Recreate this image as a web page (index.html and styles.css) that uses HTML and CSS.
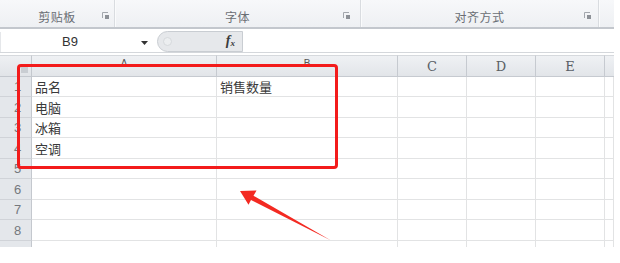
FILE: index.html
```html
<!DOCTYPE html>
<html lang="zh">
<head>
<meta charset="utf-8">
<link rel="stylesheet" href="styles.css">
</head>
<body>
<div class="app">
  <div class="ribbon">
    <div class="group g1"><span class="glabel">剪贴板</span><svg class="launch" width="7" height="7" viewBox="0 0 7 7"><path d="M0.5 6V0.5H6" fill="none" stroke="#a3a7ad"/><rect x="3" y="3" width="4" height="4" fill="#8d9197"/></svg></div>
    <div class="group g2"><span class="glabel">字体</span><svg class="launch" width="7" height="7" viewBox="0 0 7 7"><path d="M0.5 6V0.5H6" fill="none" stroke="#a3a7ad"/><rect x="3" y="3" width="4" height="4" fill="#8d9197"/></svg></div>
    <div class="group g3"><span class="glabel">对齐方式</span><svg class="launch" width="7" height="7" viewBox="0 0 7 7"><path d="M0.5 6V0.5H6" fill="none" stroke="#a3a7ad"/><rect x="3" y="3" width="4" height="4" fill="#8d9197"/></svg></div>
    <div class="group g4"></div>
  </div>
  <div class="fbar">
    <div class="namebox"><span class="nameval">B9</span><svg class="dd" width="7" height="4" viewBox="0 0 7 4"><path d="M0 0H7L3.5 4Z" fill="#333"/></svg></div>
    <div class="pill"><span class="dot"></span><span class="fx">f<sub>x</sub></span></div>
    <div class="finput"></div>
  </div>
  <div class="sheet">
    <div class="corner"><span class="tri"></span></div>
    <div class="ch ch-small">A</div>
    <div class="ch ch-small">B</div>
    <div class="ch">C</div>
    <div class="ch">D</div>
    <div class="ch">E</div>
    <div class="ch ch-last"></div>

    <div class="rh">1</div><div class="c">品名</div><div class="c">销售数量</div><div class="c"></div><div class="c"></div><div class="c"></div><div class="c"></div>
    <div class="rh">2</div><div class="c">电脑</div><div class="c"></div><div class="c"></div><div class="c"></div><div class="c"></div><div class="c"></div>
    <div class="rh">3</div><div class="c">冰箱</div><div class="c"></div><div class="c"></div><div class="c"></div><div class="c"></div><div class="c"></div>
    <div class="rh">4</div><div class="c">空调</div><div class="c"></div><div class="c"></div><div class="c"></div><div class="c"></div><div class="c"></div>
    <div class="rh">5</div><div class="c"></div><div class="c"></div><div class="c"></div><div class="c"></div><div class="c"></div><div class="c"></div>
    <div class="rh">6</div><div class="c"></div><div class="c"></div><div class="c"></div><div class="c"></div><div class="c"></div><div class="c"></div>
    <div class="rh">7</div><div class="c"></div><div class="c"></div><div class="c"></div><div class="c"></div><div class="c"></div><div class="c"></div>
    <div class="rh">8</div><div class="c"></div><div class="c"></div><div class="c"></div><div class="c"></div><div class="c"></div><div class="c"></div>
    <div class="rh rh-cut"></div><div class="c c-cut"></div><div class="c c-cut"></div><div class="c c-cut"></div><div class="c c-cut"></div><div class="c c-cut"></div><div class="c c-cut"></div>
  </div>
  <div class="highlight"></div>
  <svg class="arrow" width="620" height="263" viewBox="0 0 620 263"><polygon points="240,191 256.5,190.5 253.5,195.8 331,240.5 251,200 248.5,204.8" fill="#f32a22"/></svg>
</div>
</body>
</html>
```
FILE: styles.css
```css
* { box-sizing: border-box; }
html, body { margin: 0; padding: 0; background: #fff; }
body { width: 620px; height: 263px; overflow: hidden; font-family: "Noto Sans CJK SC", "Liberation Sans", sans-serif; }
.app { position: relative; width: 620px; height: 263px; }

.ribbon { display: flex; width: 614px; height: 29px; background: linear-gradient(#f7f8fa, #eef0f3); border-bottom: 2px solid #c3c7cd; }
.group { position: relative; display: flex; align-items: flex-end; justify-content: center; padding-bottom: 2px; border-right: 1px solid #d9dce0; box-shadow: 1px 0 0 #fafbfc; }
.g1 { width: 115px; }
.g2 { width: 246px; }
.g3 { width: 238px; }
.g4 { flex: 1; border-right: none; box-shadow: none; }
.glabel { font-size: 12px; color: #6a6e74; line-height: 16px; letter-spacing: 0.5px; }
.launch { position: absolute; bottom: 8px; }
.g1 .launch { right: 5px; }
.g2 .launch { right: 10px; }
.g3 .launch { right: 7px; }

.fbar { display: flex; align-items: center; width: 614px; height: 24px; padding-top: 2px; border-bottom: 1px solid #d4d7db; background: #fff; }
.namebox { position: relative; width: 155px; height: 20px; display: flex; align-items: center; justify-content: center; border-left: 1px solid #e5e7ea; }
.nameval { font-family: "Liberation Sans", sans-serif; font-size: 13px; color: #333; margin-right: 16px; }
.dd { position: absolute; right: 7px; top: 9px; }
.pill { position: relative; width: 86px; height: 21px; margin-left: 2px; background: #e6e8eb; border: 1px solid #c9cdd2; border-radius: 11px 0 0 11px; display: flex; align-items: center; justify-content: flex-end; padding-right: 7px; }
.dot { position: absolute; left: 5px; top: 5px; width: 9px; height: 9px; border-radius: 50%; background: #eceef0; border: 1px solid #d6d9dc; }
.fx { font-family: "Liberation Serif", serif; font-style: italic; font-weight: bold; font-size: 14px; color: #3b3b3b; line-height: 14px; }
.fx sub { font-size: 9px; vertical-align: -1px; }
.finput { flex: 1; height: 21px; background: #fff; }

.sheet { margin-top: 2px; display: grid; width: 614px; grid-template-columns: 32px 185px 181px 69px 69px 69px 9px; grid-template-rows: 22px 20px 21px 20px 21px 20px 21px 20px 21px 6px; }
.corner { position: relative; background: linear-gradient(#eef0f3, #e1e4e8); border-right: 1px solid #c4c8ce; border-bottom: 1px solid #c4c8ce; border-top: 1px solid #d6d9dd; }
.tri { position: absolute; right: 3px; bottom: 3px; width: 7px; height: 7px; background: #c9cdd2; }
.ch { background: linear-gradient(#eff1f4, #e2e5e9); border-right: 1px solid #c6cad0; border-bottom: 1px solid #c6cad0; border-top: 1px solid #d6d9dd; font-family: "DejaVu Serif", serif; font-size: 13px; color: #5a5f66; display: flex; align-items: center; justify-content: center; padding-top: 1px; }
.ch-small { font-size: 10px; align-items: flex-start; padding-top: 2px; color: #555; font-family: "Liberation Sans", sans-serif; }
.ch-last { border-right: none; }
.rh { background: #e4e7eb; border-right: 1px solid #c4c8ce; border-bottom: 1px solid #d0d3d8; font-family: "Liberation Sans", sans-serif; font-size: 13px; color: #74787d; display: flex; align-items: center; justify-content: center; padding-left: 4px; }
.c { border-right: 1px solid #e2e3e4; border-bottom: 1px solid #e2e3e4; font-size: 13px; color: #3a3a3a; display: flex; align-items: center; padding-left: 3px; line-height: 1; }
.c-cut, .rh-cut { border-bottom: none; }

.highlight { position: absolute; left: 17px; top: 64px; width: 321px; height: 105px; border: 3px solid #f31b1b; border-radius: 4px; }
.arrow { position: absolute; left: 0; top: 0; }
```
